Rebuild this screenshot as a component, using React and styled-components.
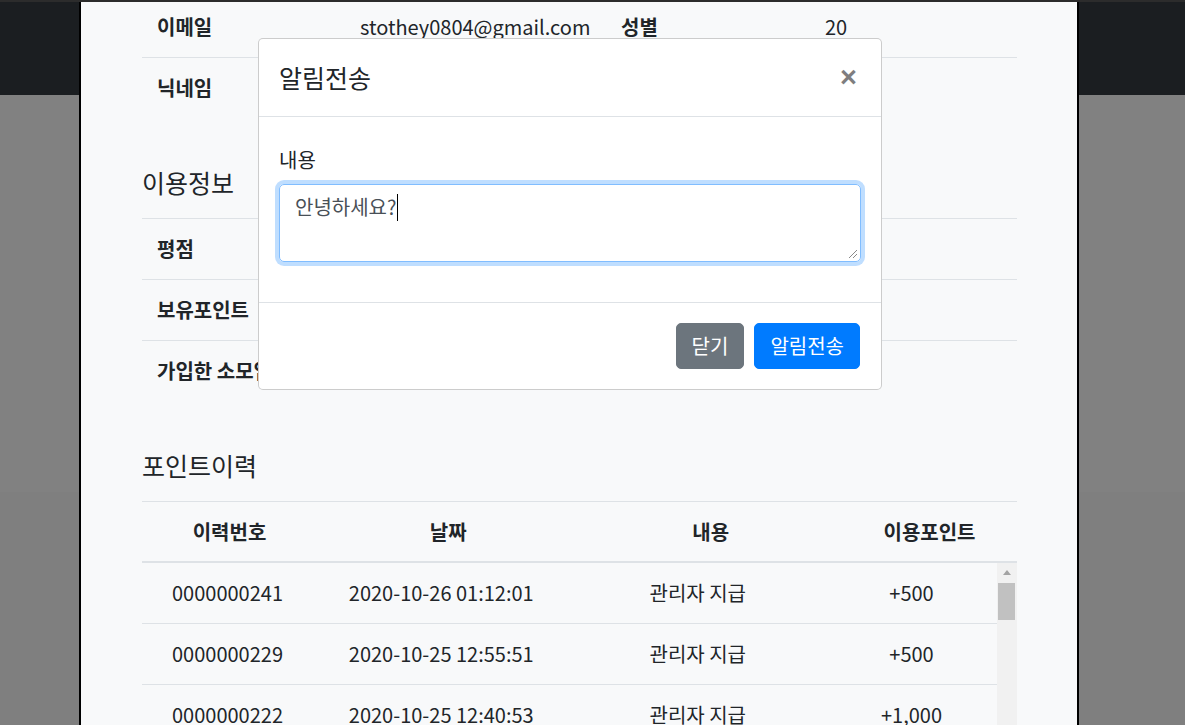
import React from "react";
import styled, { createGlobalStyle } from "styled-components";

const GlobalStyle = createGlobalStyle`
  html, body {
    margin: 0;
    padding: 0;
    overflow: hidden;
    background: #7f7f7f;
  }
  body {
    font-family: "Noto Sans CJK KR", "Noto Sans", sans-serif;
    color: #212529;
  }
  * { box-sizing: border-box; }
`;

// 화면 전체 (상단 얇은 선 포함)
const Screen = styled.div`
  position: relative;
  height: 725px;
  overflow: hidden;
  border-top: 2px solid #2c2c2c;
`;

const Navbar = styled.div`
  height: 93px;
  background: #1b1e21;
`;

const Backdrop = styled.div`
  height: ${(props) => props.h}px;
  background: ${(props) => props.color};
`;

// 회원 상세 모달 (위쪽은 스크롤되어 잘려 있음)
const DetailModal = styled.div`
  position: absolute;
  left: 79px;
  top: -8px;
  width: 1000px;
  height: 900px;
  background: #f8f9fa;
  border: 2px solid #000;
  padding: 0 60px 0 61px;
`;

const InfoRow = styled.div`
  display: grid;
  grid-template-columns: ${(props) => props.cols};
  border-top: 1px solid #dee2e6;
  font-size: 20px;
  line-height: 30px;
`;

const Cell = styled.div`
  padding: 15px;
  font-weight: ${(props) => (props.bold ? 700 : 400)};
  text-align: ${(props) => (props.center ? "center" : "left")};
  white-space: nowrap;
`;

const SectionTitle = styled.h5`
  margin: 49px 0 21px;
  font-size: 25px;
  line-height: 30px;
  font-weight: 400;
  color: #212529;
`;

const HeadRow = styled(InfoRow)`
  border-bottom: 2px solid #dee2e6;
  ${Cell} {
    padding: 15px 15px 14px;
  }
`;

const TableBody = styled.div`
  display: flex;
  height: 320px;
  overflow: hidden;
`;

const BodyRows = styled.div`
  flex: 1;
`;

const BodyRow = styled(InfoRow)`
  &:first-child {
    border-top: none;
  }
`;

const ScrollTrack = styled.div`
  width: 20px;
  background: #f1f1f1;
  display: flex;
  flex-direction: column;
  align-items: flex-start;
`;

const ScrollArrow = styled.div`
  width: 17px;
  height: 19px;
  margin-left: 1px;
  display: flex;
  align-items: center;
  justify-content: center;
  &::after {
    content: "";
    border-left: 4.5px solid transparent;
    border-right: 4.5px solid transparent;
    border-bottom: 5px solid #a3a3a3;
  }
`;

const ScrollThumb = styled.div`
  width: 17px;
  height: 37px;
  margin: 1px 0 0 1px;
  background: #c1c1c1;
`;

// 알림전송 모달
const NotifyModal = styled.div`
  position: absolute;
  left: 258px;
  top: 36px;
  width: 624px;
  background: #fff;
  border: 1px solid rgba(0, 0, 0, 0.2);
  border-radius: 5px;
`;

const ModalHeader = styled.div`
  display: flex;
  align-items: center;
  justify-content: space-between;
  padding: 20px 20px 19px;
  border-bottom: 1px solid #dee2e6;
`;

const ModalTitle = styled.h5`
  margin: 0;
  font-size: 25px;
  line-height: 37.5px;
  font-weight: 400;
`;

const CloseButton = styled.button`
  border: none;
  background: transparent;
  padding: 0 4px 0 0;
  font-family: "Liberation Sans", Arial, sans-serif;
  font-size: 29px;
  font-weight: 700;
  line-height: 1;
  color: #000;
  opacity: 0.5;
  text-shadow: 0 1px 0 #fff;
`;

const ModalBody = styled.div`
  padding: 28px 20px 20px;
  border-bottom: 1px solid #dee2e6;
`;

const FormGroup = styled.div`
  margin-bottom: 20px;
`;

const Label = styled.div`
  font-size: 20px;
  line-height: 30px;
  margin-bottom: 9px;
`;

const Field = styled.div`
  position: relative;
  height: 78px;
  border: 1px solid #80bdff;
  border-radius: 5px;
  box-shadow: 0 0 0 4px rgba(0, 123, 255, 0.25);
  padding: 7.5px 15px;
  font-size: 20px;
  line-height: 30px;
  color: #495057;
`;

const Caret = styled.span`
  display: inline-block;
  width: 1px;
  height: 27px;
  margin-left: 1px;
  background: #000;
  vertical-align: -6px;
`;

const Grip = styled.svg`
  position: absolute;
  right: 2px;
  bottom: 2px;
`;

const ModalFooter = styled.div`
  display: flex;
  justify-content: flex-end;
  gap: 10px;
  padding: 20px 21px 20px 20px;
`;

const Button = styled.button`
  font-family: inherit;
  font-size: 20px;
  line-height: 30px;
  padding: 7px 15px;
  color: #fff;
  border: 1px solid ${(props) => (props.primary ? "#007bff" : "#6c757d")};
  background: ${(props) => (props.primary ? "#007bff" : "#6c757d")};
  border-radius: 5px;
`;

const pointCols = "20% 30% 30% 20%";

const history = [
  { no: "0000000241", date: "2020-10-26 01:12:01", memo: "관리자 지급", point: "+500" },
  { no: "0000000229", date: "2020-10-25 12:55:51", memo: "관리자 지급", point: "+500" },
  { no: "0000000222", date: "2020-10-25 12:40:53", memo: "관리자 지급", point: "+1,000" },
];

const usage = ["평점", "보유포인트", "가입한 소모임"];

export default function App() {
  return (
    <>
      <GlobalStyle />
      <Screen>
        <Navbar />
        <Backdrop h={397} color="#818181" />
        <Backdrop h={233} color="#7f7f7f" />

        <DetailModal>
          <InfoRow cols="203px 261px 204px 1fr">
            <Cell bold>이메일</Cell>
            <Cell>stothey0804@gmail.com</Cell>
            <Cell bold>성별</Cell>
            <Cell>20</Cell>
          </InfoRow>
          <InfoRow cols="203px 261px 204px 1fr">
            <Cell bold>닉네임</Cell>
            <Cell />
            <Cell />
            <Cell />
          </InfoRow>

          <SectionTitle>이용정보</SectionTitle>
          {usage.map((label) => (
            <InfoRow key={label} cols="203px 1fr">
              <Cell bold>{label}</Cell>
              <Cell />
            </InfoRow>
          ))}

          <SectionTitle>포인트이력</SectionTitle>
          <HeadRow cols={pointCols}>
            <Cell bold center>이력번호</Cell>
            <Cell bold center>날짜</Cell>
            <Cell bold center>내용</Cell>
            <Cell bold center>이용포인트</Cell>
          </HeadRow>
          <TableBody>
            <BodyRows>
              {history.map((h) => (
                <BodyRow key={h.no} cols={pointCols}>
                  <Cell center>{h.no}</Cell>
                  <Cell center>{h.date}</Cell>
                  <Cell center>{h.memo}</Cell>
                  <Cell center>{h.point}</Cell>
                </BodyRow>
              ))}
            </BodyRows>
            <ScrollTrack>
              <ScrollArrow />
              <ScrollThumb />
            </ScrollTrack>
          </TableBody>
        </DetailModal>

        <NotifyModal>
          <ModalHeader>
            <ModalTitle>알림전송</ModalTitle>
            <CloseButton>×</CloseButton>
          </ModalHeader>
          <ModalBody>
            <FormGroup>
              <Label>내용</Label>
              <Field>
                안녕하세요?<Caret />
                <Grip width="11" height="11" viewBox="0 0 11 11">
                  <path d="M10 2 L2 10 M10 6 L6 10" stroke="#8a8a8a" strokeWidth="1" />
                </Grip>
              </Field>
            </FormGroup>
          </ModalBody>
          <ModalFooter>
            <Button>닫기</Button>
            <Button primary>알림전송</Button>
          </ModalFooter>
        </NotifyModal>
      </Screen>
    </>
  );
}
